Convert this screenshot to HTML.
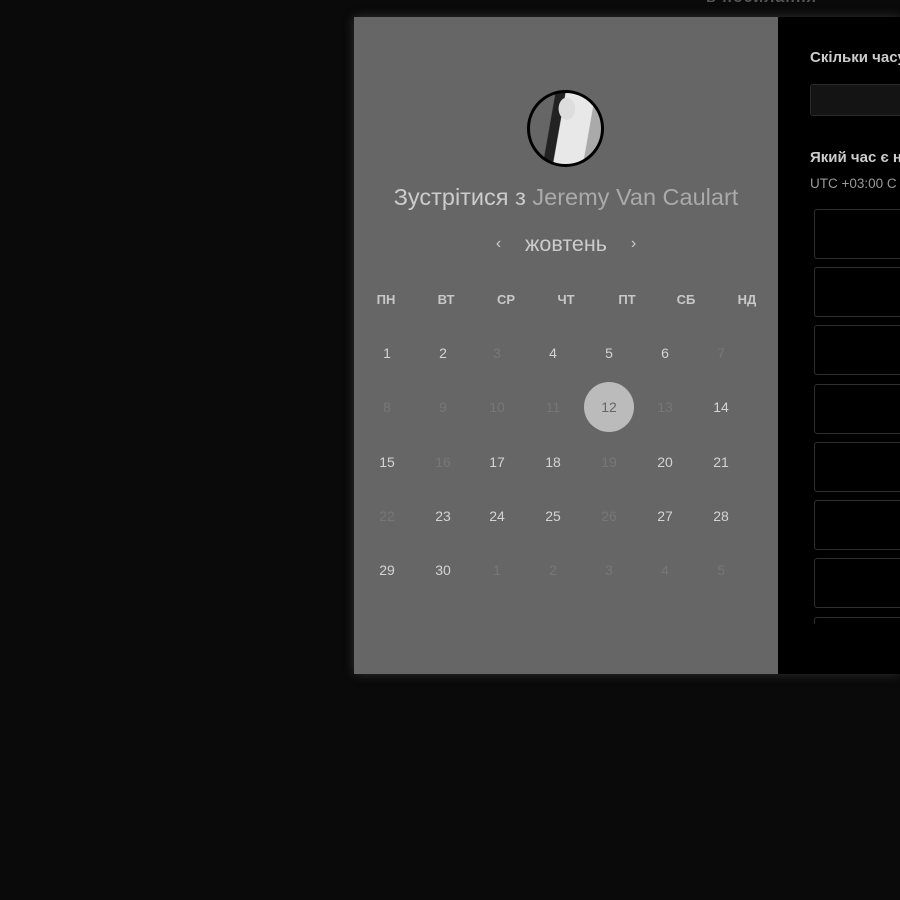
<!DOCTYPE html>
<html><head><meta charset="utf-8"><style>
*{margin:0;padding:0;box-sizing:border-box}
body{width:900px;height:900px;background:#0a0a0a;position:relative;overflow:hidden;font-family:"Liberation Sans",sans-serif}
.a{position:absolute}
.modal{left:354px;top:17px;width:546px;height:657px;box-shadow:0 0 10px rgba(120,120,120,.35)}
.left{left:354px;top:17px;width:424px;height:657px;background:#666}
.right{left:778px;top:17px;width:122px;height:657px;background:#000}
.n{position:absolute;width:40px;margin-left:-20px;text-align:center;font-size:14px;color:#d4d4d4;line-height:16px}
.d{color:#777}
.h{position:absolute;width:40px;margin-left:-20px;text-align:center;font-size:13px;font-weight:bold;color:#c8c8c8}
.slot{position:absolute;left:814px;width:120px;height:50px;border:1px solid #2e2e2e;border-radius:3px}
</style></head><body>
<div class="a" style="left:706px;top:-11px;color:#555;font-size:16px;font-weight:bold;letter-spacing:1px">в посилання</div>
<div class="a modal"></div>
<div class="a left"></div>
<div class="a right"></div>
<div class="a" style="left:527px;top:90px;width:77px;height:77px;border-radius:50%;border:3px solid #000;background:radial-gradient(ellipse 12% 16% at 52% 22%,#ddd 0 95%,transparent 100%),linear-gradient(100deg,#666 0 30%,#222 31% 42%,#e8e8e8 43% 78%,#aaa 79%);"></div>
<div class="a" style="left:354px;top:184px;width:424px;text-align:center;font-size:23.5px;color:#ccc;white-space:nowrap">Зустрітися з <span style="color:#aaa">Jeremy Van Caulart</span></div>
<div class="a" style="left:354px;top:232px;width:424px;text-align:center;font-size:21.5px;color:#ccc"><span style="font-size:16px;vertical-align:3px">‹</span>&nbsp;&nbsp;&nbsp; жовтень &nbsp;&nbsp;&nbsp;<span style="font-size:16px;vertical-align:3px">›</span></div>
<div class="a" style="left:0;top:292px;width:900px;height:20px">
<span class="h" style="left:386px">ПН</span><span class="h" style="left:446px">ВТ</span><span class="h" style="left:506px">СР</span><span class="h" style="left:566px">ЧТ</span><span class="h" style="left:627px">ПТ</span><span class="h" style="left:686px">СБ</span><span class="h" style="left:747px">НД</span></div>
<div class="a" style="left:584px;top:382px;width:50px;height:50px;border-radius:50%;background:#bbb"></div>
<div class="a" style="left:0;top:345px;width:900px;height:20px">
<span class="n" style="left:387px">1</span><span class="n" style="left:443px">2</span><span class="n d" style="left:497px">3</span><span class="n" style="left:553px">4</span><span class="n" style="left:609px">5</span><span class="n" style="left:665px">6</span><span class="n d" style="left:721px">7</span></div>
<div class="a" style="left:0;top:399px;width:900px;height:20px">
<span class="n d" style="left:387px">8</span><span class="n d" style="left:443px">9</span><span class="n d" style="left:497px">10</span><span class="n d" style="left:553px">11</span><span class="n" style="left:609px;color:#666">12</span><span class="n d" style="left:665px">13</span><span class="n" style="left:721px">14</span></div>
<div class="a" style="left:0;top:454px;width:900px;height:20px">
<span class="n" style="left:387px">15</span><span class="n d" style="left:443px">16</span><span class="n" style="left:497px">17</span><span class="n" style="left:553px">18</span><span class="n d" style="left:609px">19</span><span class="n" style="left:665px">20</span><span class="n" style="left:721px">21</span></div>
<div class="a" style="left:0;top:508px;width:900px;height:20px">
<span class="n d" style="left:387px">22</span><span class="n" style="left:443px">23</span><span class="n" style="left:497px">24</span><span class="n" style="left:553px">25</span><span class="n d" style="left:609px">26</span><span class="n" style="left:665px">27</span><span class="n" style="left:721px">28</span></div>
<div class="a" style="left:0;top:562px;width:900px;height:20px">
<span class="n" style="left:387px">29</span><span class="n" style="left:443px">30</span><span class="n d" style="left:497px">1</span><span class="n d" style="left:553px">2</span><span class="n d" style="left:609px">3</span><span class="n d" style="left:665px">4</span><span class="n d" style="left:721px">5</span></div>
<div class="a" style="left:810px;top:49px;font-size:15px;font-weight:bold;color:#ccc;white-space:nowrap">Скільки часу</div>
<div class="a" style="left:810px;top:84px;width:120px;height:32px;background:#141414;border:1px solid #2a2a2a;border-radius:3px"></div>
<div class="a" style="left:810px;top:149px;font-size:15px;font-weight:bold;color:#ccc;white-space:nowrap">Який час є н</div>
<div class="a" style="left:810px;top:176px;font-size:13.5px;color:#999;white-space:nowrap">UTC +03:00 С</div>
<div class="slot" style="top:209px"></div>
<div class="slot" style="top:267px"></div>
<div class="slot" style="top:325px"></div>
<div class="slot" style="top:384px"></div>
<div class="slot" style="top:442px"></div>
<div class="slot" style="top:500px"></div>
<div class="slot" style="top:558px"></div>
<div class="slot" style="top:617px;height:7px;border-bottom:none;border-radius:3px 3px 0 0"></div>
</body></html>
